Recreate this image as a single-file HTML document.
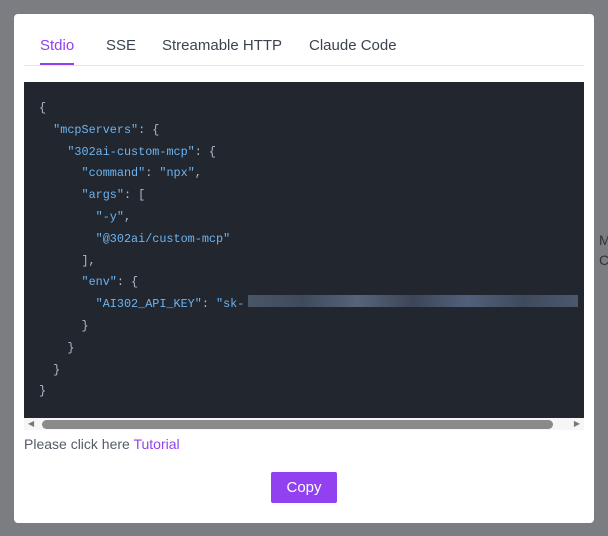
<!DOCTYPE html>
<html><head><style>
body{margin:0;width:608px;height:536px;background:#7b7d82;position:relative;overflow:hidden;font-family:"Liberation Sans",sans-serif}
.bgt{position:absolute;left:599px;color:#333;font-size:14px}
.modal{position:absolute;left:14px;top:14px;width:580px;height:509px;background:#fff;border-radius:4px}
.tab{position:absolute;top:23px;font-size:15px;color:#3c4350}
.ul{position:absolute;left:26px;top:49px;width:34px;height:2px;background:#9141f0}
.div{position:absolute;left:10px;top:51px;width:560px;height:1px;background:#e6e6e8}
.code{position:absolute;left:10px;top:68px;width:560px;height:336px;background:#22262e;overflow:hidden}
pre{margin:0;position:absolute;left:15px;top:16px;font-family:"Liberation Mono",monospace;font-size:11.8px;line-height:21.8px;color:#b4bac4}
.s{color:#6cb4f2}
.blur{position:absolute;left:224px;top:213px;width:330px;height:12px;background:linear-gradient(90deg,#4a5668,#3f4a5c,#566378,#3d4658,#51607a,#3f4a5c,#4b576c);}
.sb{position:absolute;left:10px;top:404px;width:560px;height:12px;background:#f6f6f6}
.th{position:absolute;left:18px;top:2px;width:511px;height:9px;border-radius:5px;background:#8a8a8a}
.tut{position:absolute;left:10px;top:422px;font-size:14px;color:#555b66}
.btn{position:absolute;left:257px;top:458px;width:66px;height:31px;background:#9141f0;border-radius:2px;color:#fff;font-size:15px;text-align:center;line-height:31px}
</style></head><body>
<div class="bgt" style="top:232px">M</div><div class="bgt" style="top:252px">C</div>
<div class="modal">
<div class="tab" style="left:26px;color:#9141f0">Stdio</div>
<div class="tab" style="left:92px">SSE</div>
<div class="tab" style="left:148px">Streamable HTTP</div>
<div class="tab" style="left:295px">Claude Code</div>
<div class="ul"></div><div class="div"></div>
<div class="code"><pre>{
  <span class="s">"mcpServers"</span>: {
    <span class="s">"302ai-custom-mcp"</span>: {
      <span class="s">"command"</span>: <span class="s">"npx"</span>,
      <span class="s">"args"</span>: [
        <span class="s">"-y"</span>,
        <span class="s">"@302ai/custom-mcp"</span>
      ],
      <span class="s">"env"</span>: {
        <span class="s">"AI302_API_KEY"</span>: <span class="s">"sk-</span>
      }
    }
  }
}</pre><div class="blur"></div></div>
<div class="sb"><div class="th"></div><span style="position:absolute;left:4px;top:1px;font-size:8px;color:#777">◀</span><span style="position:absolute;right:4px;top:1px;font-size:8px;color:#777">▶</span></div>
<div class="tut">Please click here <span style="color:#9141f0">Tutorial</span></div>
<div class="btn">Copy</div>
</div>
</body></html>
